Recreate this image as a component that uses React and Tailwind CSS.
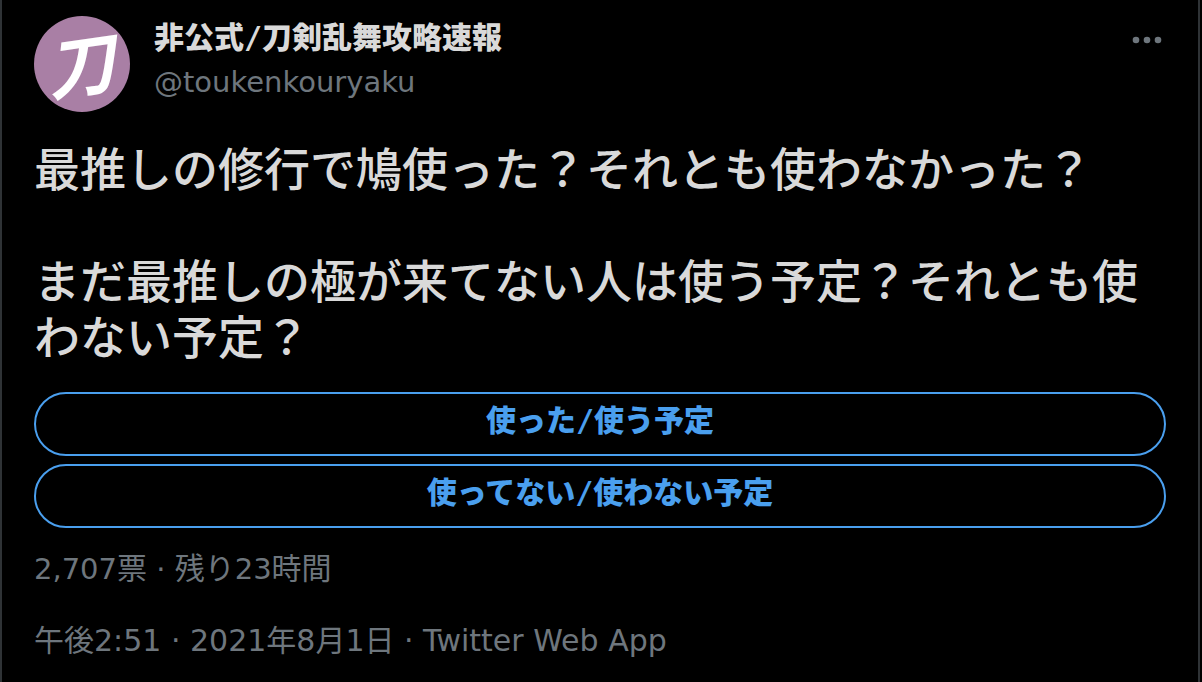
import React from "react";

const latin = "font-['DejaVu_Sans','Noto_Sans_CJK_JP',sans-serif]";

function Avatar() {
  return (
    <a
      href="#profile"
      aria-label="プロフィール"
      className="flex size-24 shrink-0 items-center justify-center rounded-full bg-[#a97fa5] pr-1 pb-1 text-[68px] leading-[92px] font-bold text-white italic"
    >
      <span className="-rotate-8">刀</span>
    </a>
  );
}

function MoreButton() {
  return (
    <button type="button" aria-label="もっと見る" className="h-12 w-[38px] shrink-0 text-[#6e767d]">
      <svg viewBox="0 0 38 48" className="h-12 w-[38px]" fill="currentColor" aria-hidden="true">
        <circle cx="8" cy="24" r="3.3" />
        <circle cx="19" cy="24" r="3.3" />
        <circle cx="30" cy="24" r="3.3" />
      </svg>
    </button>
  );
}

function PollOption({ children }) {
  return (
    <button
      type="button"
      className="h-16 w-full rounded-full border-2 border-[#4a9fee] pb-1.5 font-['DejaVu_Sans_Mono','Noto_Sans_CJK_JP',sans-serif] text-[30px] leading-10 font-black text-[#4a9fee]"
    >
      {children}
    </button>
  );
}

export default function App() {
  return (
    <main className="min-h-screen bg-black pr-0.5 font-['Noto_Sans_CJK_JP',sans-serif]" lang="ja">
      <article className="min-h-screen border-x-2 border-[#2f3336] px-8 pt-4 text-[#d9d9d9]">
        <header className="flex items-start">
          <Avatar />
          <div className="ml-6 min-w-0 flex-1">
            <h1 className="font-['DejaVu_Sans_Mono','Noto_Sans_CJK_JP',sans-serif] text-[30px] leading-[44px] font-black">
              非公式/刀剣乱舞攻略速報
            </h1>
            <p className={`${latin} text-[29px] leading-[44px] text-[#6e767d]`}>@toukenkouryaku</p>
          </div>
          <MoreButton />
        </header>

        <div className="mt-[26px] text-[46px] leading-[56px] font-medium">
          <p>最推しの修行で鳩使った？それとも使わなかった？</p>
          <p className="mt-14">まだ最推しの極が来てない人は使う予定？それとも使わない予定？</p>
        </div>

        <div className="mt-[30px] flex flex-col gap-2">
          <PollOption>使った/使う予定</PollOption>
          <PollOption>使ってない/使わない予定</PollOption>
        </div>

        <p className="mt-4 text-[30px] leading-[44px] text-[#6e767d]">
          <span className={`${latin} text-[29px]`}>2,707</span>票
          <span className={`${latin} text-[29px]`}> · </span>
          残り<span className={`${latin} text-[29px]`}>23</span>時間
        </p>
        <p className={`${latin} mt-7 text-[30px] leading-[44px] text-[#6e767d]`}>
          午後2:51 · 2021年8月1日 · Twitter Web App
        </p>
      </article>
    </main>
  );
}
